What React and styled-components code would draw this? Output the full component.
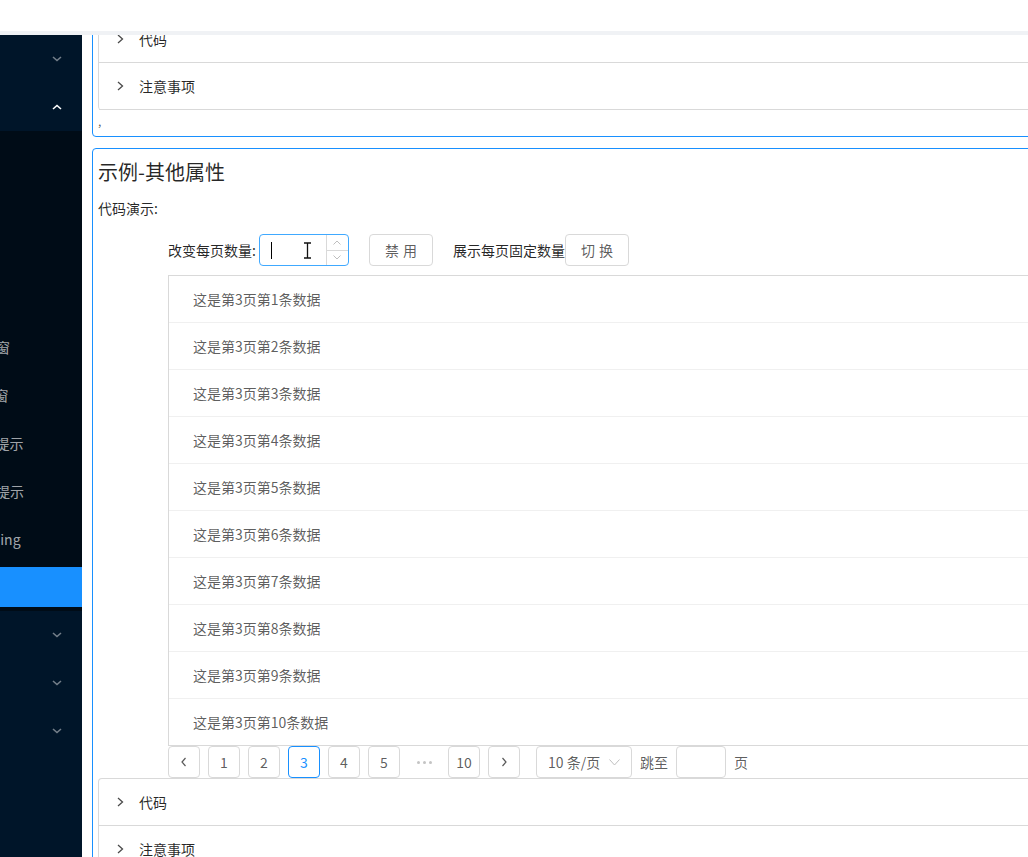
import React from 'react';
import styled, { createGlobalStyle } from 'styled-components';

const GlobalStyle = createGlobalStyle`
  html, body {
    margin: 0;
    padding: 0;
    overflow: hidden;
    font-family: "Noto Sans CJK SC", "Noto Sans", sans-serif;
    font-size: 14px;
    color: rgba(0, 0, 0, 0.65);
  }
  * { box-sizing: border-box; }
`;

const Page = styled.div`
  display: flex;
  flex-direction: column;
  width: 100vw;
  height: 100vh;
  background: #fff;
`;

const Header = styled.div`
  height: 31px;
  flex-shrink: 0;
  background: #fff;
  border-bottom: 4px solid #f0f2f5;
  box-sizing: content-box;
`;

const Body = styled.div`
  flex: 1;
  display: flex;
  overflow: hidden;
`;

const Sider = styled.div`
  width: 82px;
  flex-shrink: 0;
  background: #001529;
  overflow: hidden;
`;

const Menu = styled.div`
  width: 200px;
  margin-left: -118px;
  display: flex;
  flex-direction: column;
`;

const SubTitle = styled.div`
  height: 40px;
  margin: 4px 0;
  display: flex;
  align-items: center;
  justify-content: flex-end;
  padding-right: 20px;
  color: ${p => (p.open ? '#fff' : 'rgba(255,255,255,0.45)')};
`;

const SubList = styled.div`
  display: flex;
  flex-direction: column;
  background: #000c17;
`;

const MenuItem = styled.div`
  height: 40px;
  margin: 4px 0;
  padding-left: 58px;
  line-height: 40px;
  white-space: nowrap;
  color: rgba(255, 255, 255, 0.65);
  background: ${p => (p.active ? '#1890ff' : 'transparent')};
`;

const Main = styled.div`
  flex: 1;
  overflow: hidden;
  padding-left: 10px;
  background: #fff;
`;

const Scroll = styled.div`
  margin-top: -26px;
  margin-right: -60px;
`;

const Card = styled.div`
  border: 1px solid #1890ff;
  border-radius: 4px;
  padding: 5px 5px 4px;
  margin-bottom: 11px;
`;

const Collapse = styled.div`
  border: 1px solid #d9d9d9;
  border-bottom: 0;
  border-radius: 4px;
  background: #fff;
`;

const Panel = styled.div`
  position: relative;
  padding: 12px 16px 12px 40px;
  line-height: 22px;
  border-bottom: 1px solid #d9d9d9;
  color: rgba(0, 0, 0, 0.85);
  svg {
    position: absolute;
    left: 18px;
    top: 18px;
  }
`;

const Stray = styled.div`
  line-height: 22px;
  font-size: 12px;
`;

const Title = styled.div`
  margin-top: 4px;
  font-size: 20px;
  line-height: 28px;
  color: rgba(0, 0, 0, 0.85);
`;

const Label = styled.div`
  margin-top: 11px;
  line-height: 22px;
  color: rgba(0, 0, 0, 0.85);
`;

const Demo = styled.div`
  padding-left: 70px;
  margin-top: 15px;
`;

const Controls = styled.div`
  display: flex;
  align-items: center;
  height: 32px;
  color: rgba(0, 0, 0, 0.85);
`;

const NumberInput = styled.div`
  position: relative;
  display: flex;
  width: 90px;
  height: 32px;
  margin-left: 3px;
  border: 1px solid #40a9ff;
  border-radius: 4px;
`;

const Field = styled.div`
  flex: 1;
  display: flex;
  align-items: center;
  padding-left: 11px;
`;

const Caret = styled.span`
  width: 1px;
  height: 17px;
  background: #000;
`;

const Handler = styled.div`
  width: 22px;
  display: flex;
  flex-direction: column;
  border-left: 1px solid #d9d9d9;
`;

const HandlerHalf = styled.div`
  flex: 1;
  display: flex;
  align-items: center;
  justify-content: center;
  color: #bfbfbf;
  border-top: ${p => (p.down ? '1px solid #d9d9d9' : '0')};
`;

const Cursor = styled.svg`
  position: absolute;
  left: 43px;
  top: 7px;
`;

const Button = styled.button`
  width: 64px;
  height: 32px;
  margin-left: ${p => p.gap || 0}px;
  border: 1px solid #d9d9d9;
  border-radius: 4px;
  background: #fff;
  font-family: inherit;
  font-size: 14px;
  letter-spacing: 4px;
  text-indent: 4px;
  color: rgba(0, 0, 0, 0.65);
  padding: 0;
`;

const Text = styled.span`
  margin-left: ${p => p.gap || 0}px;
  white-space: nowrap;
`;

const List = styled.div`
  margin-top: 9px;
  border: 1px solid #d9d9d9;
`;

const Row = styled.div`
  padding: 12px 24px;
  line-height: 22px;
  color: rgba(0, 0, 0, 0.65);
  border-bottom: 1px solid #f0f0f0;
  &:last-child { border-bottom: 0; }
`;

const Pager = styled.div`
  display: flex;
  align-items: center;
  height: 32px;
  color: rgba(0, 0, 0, 0.65);
`;

const PageItem = styled.div`
  width: 32px;
  height: 32px;
  margin-right: 8px;
  display: flex;
  align-items: center;
  justify-content: center;
  border: 1px solid ${p => (p.active ? '#1890ff' : '#d9d9d9')};
  border-radius: 4px;
  color: ${p => (p.active ? '#1890ff' : 'rgba(0,0,0,0.65)')};
`;

const Ellipsis = styled.div`
  width: 32px;
  height: 32px;
  margin-right: 8px;
  display: flex;
  align-items: center;
  justify-content: center;
  gap: 3px;
`;

const Dot = styled.span`
  width: 3px;
  height: 3px;
  border-radius: 50%;
  background: #c4c4c4;
`;

const Select = styled.div`
  width: 96px;
  height: 32px;
  margin-left: 8px;
  padding: 0 11px;
  display: flex;
  align-items: center;
  justify-content: space-between;
  border: 1px solid #d9d9d9;
  border-radius: 4px;
  color: rgba(0, 0, 0, 0.65);
`;

const SelectArrow = styled.span`
  display: flex;
  color: #bfbfbf;
`;

const JumpInput = styled.div`
  width: 50px;
  height: 32px;
  margin: 0 8px;
  border: 1px solid #d9d9d9;
  border-radius: 4px;
`;

const Chevron = ({ up }) => (
  <svg width="10" height="6" viewBox="0 0 10 6">
    <path d={up ? 'M1 5L5 1.5L9 5' : 'M1 1L5 4.5L9 1'} stroke="currentColor" strokeWidth="1.6" fill="none" />
  </svg>
);

const Arrow = () => (
  <svg width="7" height="10" viewBox="0 0 7 10">
    <path d="M1 1L5.5 5L1 9" stroke="#4a4a4a" strokeWidth="1.3" fill="none" />
  </svg>
);

const Small = ({ d, w = 8, h = 5 }) => (
  <svg width={w} height={h} viewBox={`0 0 ${w} ${h}`}>
    <path d={d} stroke="currentColor" strokeWidth="1" fill="none" />
  </svg>
);

const Pointer = ({ d }) => (
  <svg width="8" height="12" viewBox="0 0 8 12">
    <path d={d} stroke="#595959" strokeWidth="1.2" fill="none" />
  </svg>
);

const menuItems = [
  '按钮', '图标', '输入框', '选择器',
  '确认框弹窗', 'Modal弹窗', 'Message提示', '通知提醒提示', '页面Loading', '分页',
];

const rows = Array.from({ length: 10 }, (_, i) => `这是第3页第${i + 1}条数据`);

const CollapseBlock = () => (
  <Collapse>
    <Panel><Arrow />代码</Panel>
    <Panel><Arrow />注意事项</Panel>
  </Collapse>
);

const App = () => (
  <Page>
    <GlobalStyle />
    <Header />
    <Body>
      <Sider>
        <Menu>
          <SubTitle><Chevron /></SubTitle>
          <SubTitle open><Chevron up /></SubTitle>
          <SubList>
            {menuItems.map((m, i) => (
              <MenuItem key={m} active={i === menuItems.length - 1}>{m}</MenuItem>
            ))}
          </SubList>
          <SubTitle><Chevron /></SubTitle>
          <SubTitle><Chevron /></SubTitle>
          <SubTitle><Chevron /></SubTitle>
        </Menu>
      </Sider>
      <Main>
        <Scroll>
          <Card>
            <CollapseBlock />
            <Stray>,</Stray>
          </Card>
          <Card>
            <Title>示例-其他属性</Title>
            <Label>代码演示:</Label>
            <Demo>
              <Controls>
                <Text>改变每页数量:</Text>
                <NumberInput>
                  <Field><Caret /></Field>
                  <Handler>
                    <HandlerHalf><Small d="M0.5 4.5L4 1L7.5 4.5" /></HandlerHalf>
                    <HandlerHalf down><Small d="M0.5 0.5L4 4L7.5 0.5" /></HandlerHalf>
                  </Handler>
                  <Cursor width="9" height="17" viewBox="0 0 9 17">
                    <path d="M1 1H8M4.5 1V16M1 16H8" stroke="#111" strokeWidth="1.3" fill="none" />
                  </Cursor>
                </NumberInput>
                <Button gap={20}>禁用</Button>
                <Text gap={20}>展示每页固定数量</Text>
                <Button>切换</Button>
              </Controls>
              <List>
                {rows.map(r => <Row key={r}>{r}</Row>)}
              </List>
              <Pager>
                <PageItem><Pointer d="M5.5 2L2 6L5.5 10" /></PageItem>
                {['1', '2', '3', '4', '5'].map(n => (
                  <PageItem key={n} active={n === '3'}>{n}</PageItem>
                ))}
                <Ellipsis><Dot /><Dot /><Dot /></Ellipsis>
                <PageItem>10</PageItem>
                <PageItem><Pointer d="M2.5 2L6 6L2.5 10" /></PageItem>
                <Select>
                  <span>10 条/页</span>
                  <SelectArrow>
                    <Small w={11} h={7} d="M0.5 0.5L5.5 6L10.5 0.5" />
                  </SelectArrow>
                </Select>
                <Text gap={8}>跳至</Text>
                <JumpInput />
                <Text>页</Text>
              </Pager>
            </Demo>
            <CollapseBlock />
          </Card>
        </Scroll>
      </Main>
    </Body>
  </Page>
);

export default App;
